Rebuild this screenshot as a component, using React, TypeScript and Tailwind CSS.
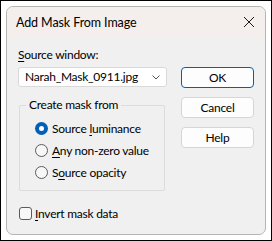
import React from "react";

export default function App() {
  return (
    <div
      className="w-[272px] h-[241px] bg-white border border-black p-[5px] text-[12px] text-black leading-none tracking-[-0.25px]"
      style={{ fontFamily: '"Segoe UI", Lato, "Noto Sans", sans-serif' }}
    >
      <div className="w-[260px] h-[229px] rounded-[7px] border border-[#b5b5b5] bg-[#f0f0f0] overflow-hidden flex flex-col">
        <div className="h-[30px] bg-[#f4eeec] flex items-center justify-between pl-[9px] pr-[10px] shrink-0">
          <span className="text-[12.5px] leading-[14px] pt-[2px] tracking-[-0.1px]">Add Mask From Image</span>
          <svg width="12" height="12" viewBox="0 0 12 12">
            <path d="M1 1 L11 11 M11 1 L1 11" stroke="#1a1a1a" strokeWidth="1" />
          </svg>
        </div>
        <div className="flex pl-[11px] pt-[11px]">
          <div className="w-[149px] flex flex-col">
            <div className="h-[14px] flex items-center">
              <span>
                <span className="underline underline-offset-[2px]">S</span>ource window:
              </span>
            </div>
            <div className="mt-[5px] h-[20px] w-[149px] bg-white border border-[#d9d9d9] rounded-[3px] flex items-center justify-between pl-[6px] pr-[6px]">
              <span>Narah_Mask_0911.jpg</span>
              <svg width="8" height="5" viewBox="0 0 8 5">
                <path d="M0.5 0.5 L4 4 L7.5 0.5" stroke="#555" strokeWidth="1" fill="none" />
              </svg>
            </div>
            <div className="relative mt-[18px] ml-[1px] w-[146px] h-[86px] border border-[#dcdcdc] rounded-[2px]">
              <span className="absolute -top-[8px] left-[6px] bg-[#f0f0f0] px-[3px] leading-[14px]">
                Create mask from
              </span>
              <div className="flex flex-col pl-[15px] pt-[16px] gap-[9px]">
                <label className="flex items-center gap-[4px] h-[13px]">
                  <span className="w-[13px] h-[13px] rounded-full bg-[#005fb8] flex items-center justify-center">
                    <span className="w-[5px] h-[5px] rounded-full bg-white" />
                  </span>
                  <span>
                    Source <span className="underline underline-offset-[2px]">l</span>uminance
                  </span>
                </label>
                <label className="flex items-center gap-[4px] h-[13px]">
                  <span className="w-[13px] h-[13px] rounded-full border border-[#5b5b5b] bg-[#f7f7f7]" />
                  <span>
                    <span className="underline underline-offset-[2px]">A</span>ny non-zero value
                  </span>
                </label>
                <label className="flex items-center gap-[4px] h-[13px]">
                  <span className="w-[13px] h-[13px] rounded-full border border-[#5b5b5b] bg-[#f7f7f7]" />
                  <span>
                    S<span className="underline underline-offset-[2px]">o</span>urce opacity
                  </span>
                </label>
              </div>
            </div>
            <label className="mt-[16px] flex items-center gap-[3px] h-[13px] ml-[1px]">
              <span className="w-[13px] h-[13px] rounded-[3px] border border-[#5b5b5b] bg-[#f7f7f7]" />
              <span>
                <span className="underline underline-offset-[2px]">I</span>nvert mask data
              </span>
            </label>
          </div>
          <div className="ml-[14px] mt-[19px] flex flex-col gap-[9px]">
            <button className="w-[73px] h-[21px] rounded-[4px] border border-[#005fb8] bg-[#fdfdfd] flex items-center justify-center">
              OK
            </button>
            <button className="w-[73px] h-[21px] rounded-[4px] border border-[#d6d6d6] bg-[#fdfdfd] flex items-center justify-center">
              Cancel
            </button>
            <button className="w-[73px] h-[21px] rounded-[4px] border border-[#d6d6d6] bg-[#fdfdfd] flex items-center justify-center">
              Help
            </button>
          </div>
        </div>
      </div>
    </div>
  );
}
